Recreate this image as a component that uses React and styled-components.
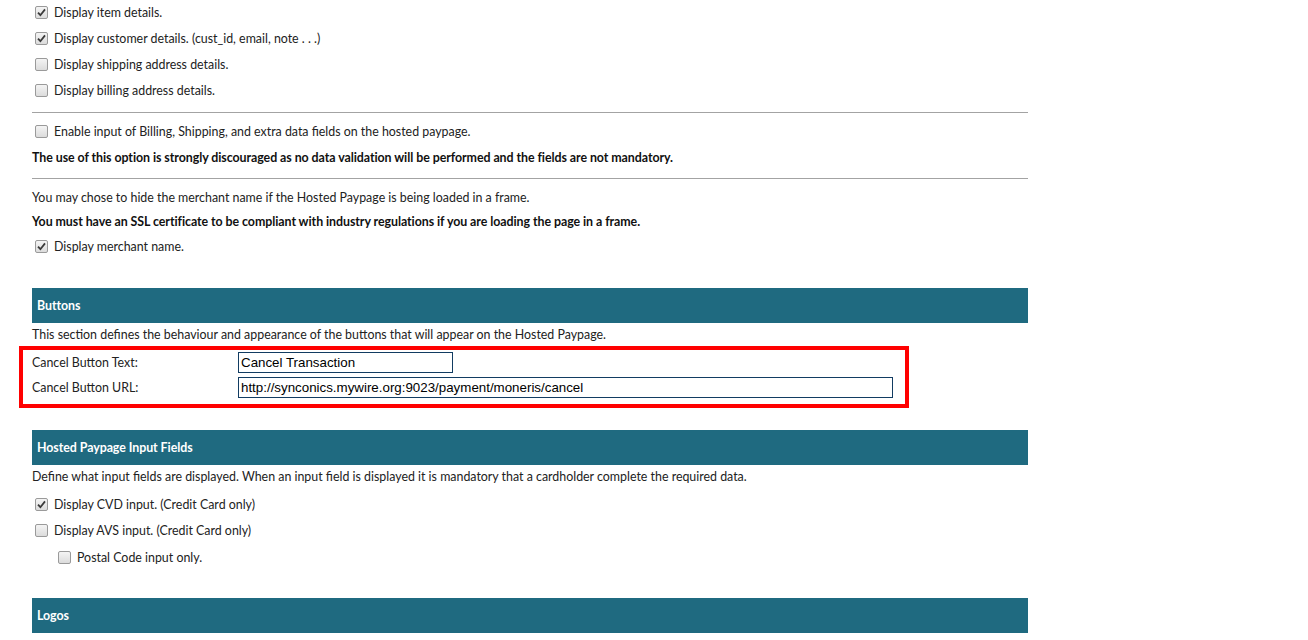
import React from "react";
import styled, { createGlobalStyle } from "styled-components";

const GlobalStyle = createGlobalStyle`
  body {
    margin: 0;
    background: #ffffff;
    font-family: Lato, "Open Sans", sans-serif;
    font-size: 12.4px;
    color: #222222;
  }
`;

const Check = ({ checked }) => (
  <Box>
    {checked && (
      <svg width="9" height="9" viewBox="0 0 9 9">
        <path d="M1 4.6 L3.4 7.2 L8 1.4" fill="none" stroke="#3a3a3a" strokeWidth="1.8" />
      </svg>
    )}
  </Box>
);

const Option = ({ checked, indent, top, children }) => (
  <OptionRow $indent={indent} $top={top}>
    <Check checked={checked} />
    <span>{children}</span>
  </OptionRow>
);

const App = () => {
  return (
    <>
      <GlobalStyle />
      <Page>
        <Option checked>Display item details.</Option>
        <Option checked>Display customer details. (cust_id, email, note . . .)</Option>
        <Option>Display shipping address details.</Option>
        <Option>Display billing address details.</Option>
        <Rule />
        <Group>
          <Option>Enable input of Billing, Shipping, and extra data fields on the hosted paypage.</Option>
          <Note $bold $h={26}>
            The use of this option is strongly discouraged as no data validation will be performed and the fields are not mandatory.
          </Note>
        </Group>
        <Rule $top={8} />
        <Group $top={6}>
          <Note>You may chose to hide the merchant name if the Hosted Paypage is being loaded in a frame.</Note>
          <Note $bold>
            You must have an SSL certificate to be compliant with industry regulations if you are loading the page in a frame.
          </Note>
          <Option checked>Display merchant name.</Option>
        </Group>

        <SectionHeader $top={29}>Buttons</SectionHeader>
        <Description>
          This section defines the behaviour and appearance of the buttons that will appear on the Hosted Paypage.
        </Description>
        <Highlight>
          <FieldLabel>Cancel Button Text:</FieldLabel>
          <TextInput $width={215} defaultValue="Cancel Transaction" />
          <FieldLabel>Cancel Button URL:</FieldLabel>
          <TextInput $width={655} defaultValue="http://synconics.mywire.org:9023/payment/moneris/cancel" />
        </Highlight>

        <SectionHeader $top={22}>Hosted Paypage Input Fields</SectionHeader>
        <Description>
          Define what input fields are displayed. When an input field is displayed it is mandatory that a cardholder complete the required data.
        </Description>
        <Group $top={3}>
          <Option checked>Display CVD input. (Credit Card only)</Option>
          <Option>Display AVS input. (Credit Card only)</Option>
          <Option indent top={1}>Postal Code input only.</Option>
        </Group>

        <SectionHeader $top={28}>Logos</SectionHeader>
      </Page>
    </>
  );
};

export default App;

const Page = styled.div`
  width: 996px;
  margin-left: 32px;
  margin-top: -1px;
  display: flex;
  flex-direction: column;
`;

const OptionRow = styled.div`
  display: flex;
  align-items: center;
  height: 26px;
  margin-top: ${(p) => p.$top || 0}px;
  padding-left: ${(p) => (p.$indent ? "26px" : "3px")};
  gap: 6px;
`;

const Box = styled.span`
  width: 11px;
  height: 11px;
  border: 1px solid #9a9a9a;
  border-radius: 2px;
  background: linear-gradient(#f4f4f4, #dcdcdc);
  display: flex;
  align-items: center;
  justify-content: center;
  flex-shrink: 0;
`;

const Rule = styled.hr`
  border: none;
  border-top: 1px solid #a3a3a3;
  margin: ${(p) => p.$top || 9}px 0 0;
  height: 0;
`;

const Group = styled.div`
  display: flex;
  flex-direction: column;
  margin-top: ${(p) => (p.$top !== undefined ? p.$top : 5)}px;
`;

const Note = styled.div`
  height: ${(p) => p.$h || 24}px;
  display: flex;
  align-items: center;
  font-weight: ${(p) => (p.$bold ? 700 : 400)};
  letter-spacing: ${(p) => (p.$bold ? "-0.06px" : "0")};
  color: ${(p) => (p.$bold ? "#111111" : "#222222")};
`;

const SectionHeader = styled.div`
  margin-top: ${(p) => p.$top}px;
  height: 35px;
  background: #1f6a80;
  color: #ffffff;
  font-weight: 700;
  letter-spacing: -0.06px;
  display: flex;
  align-items: center;
  padding-left: 5px;
`;

const Description = styled.div`
  height: 23px;
  display: flex;
  align-items: center;
`;

const Highlight = styled.div`
  width: 890px;
  box-sizing: border-box;
  margin-left: -13px;
  border: 4px solid #ff0000;
  padding: 2px 12px 6px 9px;
  display: grid;
  grid-template-columns: 206px 1fr;
  row-gap: 4px;
  align-items: center;
`;

const FieldLabel = styled.span`
  color: #222222;
`;

const TextInput = styled.input`
  width: ${(p) => p.$width}px;
  height: 21px;
  box-sizing: border-box;
  border: 1px solid #123c62;
  padding: 0 2px;
  font-family: "Liberation Sans", Arial, sans-serif;
  font-size: 13.33px;
  color: #000000;
  outline: none;
`;
